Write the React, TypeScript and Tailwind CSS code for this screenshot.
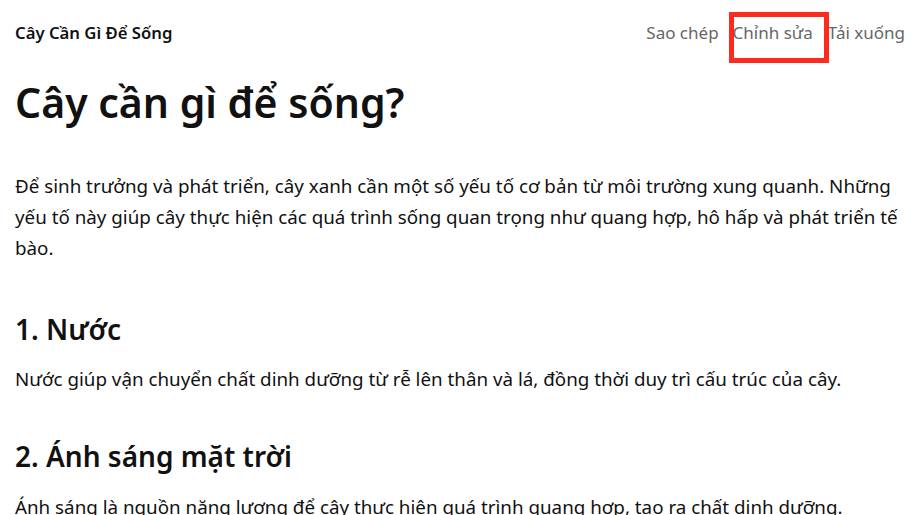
export default function App() {
  return (
    <div
      className="min-h-screen bg-white text-[#111]"
      style={{ fontFamily: '"Noto Sans", "Open Sans", sans-serif' }}
    >
      <header className="flex items-center justify-between pl-[15px] pr-[12px] h-[66px]">
        <span className="text-[16.7px] font-semibold">Cây Cần Gì Để Sống</span>
        <nav className="flex items-center text-[17px] leading-[26px] text-[#666]">
          <a className="mr-[14px]">Sao chép</a>
          <a className="relative">
            Chỉnh sửa
            <span className="absolute left-[-4px] right-[-16px] top-[-8px] bottom-[-17px] border-[5px] border-[#ff2a1f]" />
          </a>
          <a className="ml-[15px]">Tải xuống</a>
        </nav>
      </header>
      <main className="px-[15px]">
        <h1 className="text-[41px] font-semibold leading-[51px] mt-[11px] mb-[43px]">Cây cần gì để sống?</h1>
        <p className="text-[18.8px] leading-[31px]">
          Để sinh trưởng và phát triển, cây xanh cần một số yếu tố cơ bản từ môi trường xung quanh. Những yếu tố này giúp cây thực hiện các quá trình sống quan trọng như quang hợp, hô hấp và phát triển tế bào.
        </p>
        <h2 className="text-[28px] font-semibold leading-[35px] mt-[48px] mb-[17px]">1. Nước</h2>
        <p className="text-[18.8px] leading-[31px]">
          Nước giúp vận chuyển chất dinh dưỡng từ rễ lên thân và lá, đồng thời duy trì cấu trúc của cây.
        </p>
        <h2 className="text-[28px] font-semibold leading-[35px] mt-[44px] mb-[18px]">2. Ánh sáng mặt trời</h2>
        <p className="text-[18.8px] leading-[31px]">
          Ánh sáng là nguồn năng lượng để cây thực hiện quá trình quang hợp, tạo ra chất dinh dưỡng.
        </p>
      </main>
    </div>
  );
}
